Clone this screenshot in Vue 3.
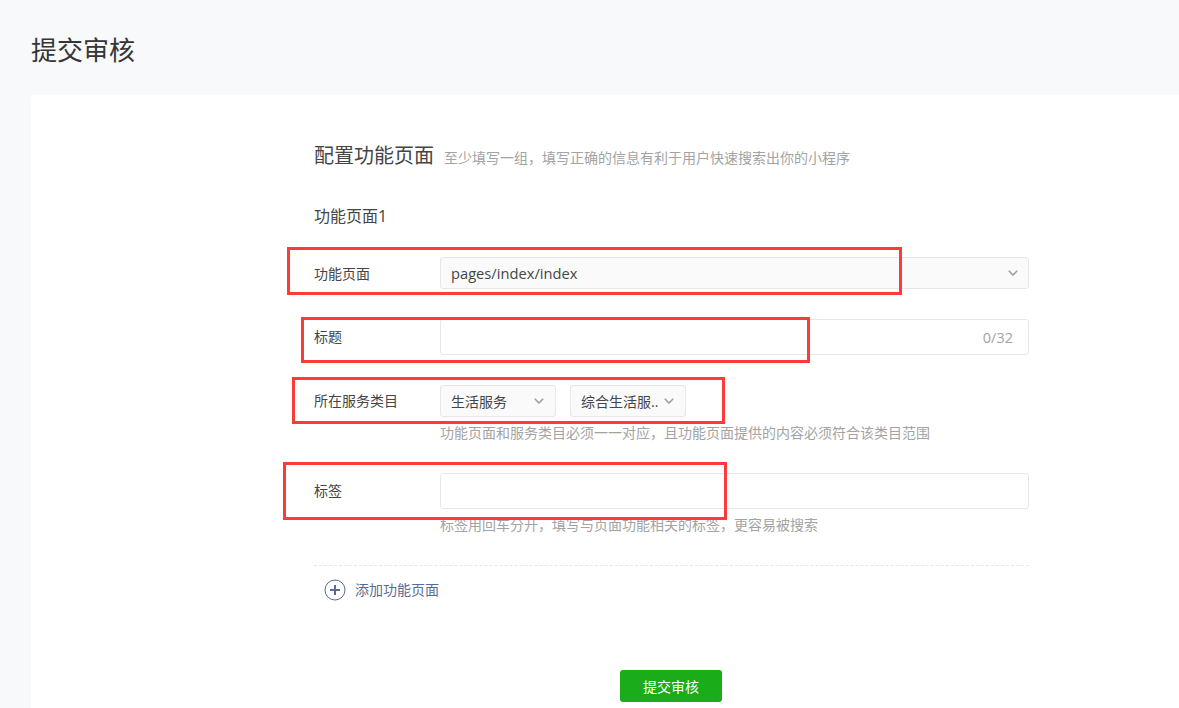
<script setup>
const annotations = [
  { left: 287, top: 247, width: 615, height: 48 },
  { left: 301, top: 317, width: 509, height: 46 },
  { left: 292, top: 377, width: 433, height: 47 },
  { left: 283, top: 462, width: 444, height: 58 }
]
</script>

<template>
  <div class="page">
    <h1 class="page-title">提交审核</h1>
    <main class="card">
      <div class="form">
        <div class="heading">
          <h2>配置功能页面</h2>
          <span>至少填写一组，填写正确的信息有利于用户快速搜索出你的小程序</span>
        </div>
        <h3 class="group-title">功能页面1</h3>

        <div class="row row-page">
          <label>功能页面</label>
          <div class="control select wide">
            <span class="value">pages/index/index</span>
            <svg class="chevron" viewBox="0 0 10 6" aria-hidden="true"><path d="M.8.8 5 5l4.2-4.2" /></svg>
          </div>
        </div>

        <div class="row row-title">
          <label>标题</label>
          <div class="control field">
            <span class="count">0/32</span>
          </div>
        </div>

        <div class="row row-category">
          <label>所在服务类目</label>
          <div class="selects">
            <div class="control select small">
              <span class="value">生活服务</span>
              <svg class="chevron" viewBox="0 0 10 6" aria-hidden="true"><path d="M.8.8 5 5l4.2-4.2" /></svg>
            </div>
            <div class="control select small">
              <span class="value">综合生活服..</span>
              <svg class="chevron" viewBox="0 0 10 6" aria-hidden="true"><path d="M.8.8 5 5l4.2-4.2" /></svg>
            </div>
          </div>
        </div>
        <p class="hint hint-category">功能页面和服务类目必须一一对应，且功能页面提供的内容必须符合该类目范围</p>

        <div class="row row-tags">
          <label>标签</label>
          <div class="control field"></div>
        </div>
        <p class="hint hint-tags">标签用回车分开，填写与页面功能相关的标签，更容易被搜索</p>

        <div class="add">
          <svg viewBox="0 0 22 22" aria-hidden="true">
            <circle cx="11" cy="11" r="10" class="ring" />
            <path d="M11 6v10M6 11h10" class="plus" />
          </svg>
          <span>添加功能页面</span>
        </div>

        <div class="actions">
          <button type="button">提交审核</button>
        </div>
      </div>
    </main>

    <div
      v-for="(box, index) in annotations"
      :key="index"
      class="annotation"
      :style="{ left: box.left + 'px', top: box.top + 'px', width: box.width + 'px', height: box.height + 'px' }"
    ></div>
  </div>
</template>

<style scoped>
.page {
  position: relative;
  height: 708px;
  overflow: hidden;
  background: #f8f9fb;
  font-family: "Open Sans", "Noto Sans CJK SC", sans-serif;
  color: #454545;
}
.page-title {
  margin: 0;
  padding: 31px 0 0 31px;
  height: 95px;
  box-sizing: border-box;
  font-size: 26px;
  line-height: 38px;
  font-weight: 400;
  color: #353535;
}
.card {
  margin-left: 31px;
  height: 613px;
  background: #fff;
  border-radius: 4px 0 0 0;
  padding: 46px 0 0 283px;
  box-sizing: border-box;
}
.form {
  width: 715px;
}
.heading {
  display: flex;
  align-items: baseline;
  height: 30px;
}
.heading h2 {
  margin: 0 10px 0 0;
  font-size: 20px;
  line-height: 30px;
  font-weight: 400;
}
.heading span {
  font-size: 14px;
  color: #a3a3a3;
}
.group-title {
  margin: 33px 0 0;
  font-size: 16px;
  line-height: 24px;
  font-weight: 400;
}
.row {
  display: grid;
  grid-template-columns: 126px 1fr;
  align-items: center;
}
.row label {
  font-size: 14px;
  line-height: 20px;
}
.row-page { margin-top: 29px; }
.row-page label { padding-top: 2px; }
.row-title { margin-top: 30px; }
.row-category { margin-top: 30px; }
.row-tags { margin-top: 30px; }
.control {
  display: flex;
  align-items: center;
  box-sizing: border-box;
  border: 1px solid #e7e7eb;
  border-radius: 3px;
}
.select {
  height: 32px;
  padding: 0 10px;
  background: #fafafa;
  justify-content: space-between;
}
.value {
  font-size: 14px;
  white-space: nowrap;
}
.wide .value {
  font-size: 14.7px;
}
.chevron {
  width: 10px;
  height: 6px;
  flex: none;
  fill: none;
  stroke: #9a9a9a;
  stroke-width: 1.5;
}
.field {
  height: 36px;
  padding: 0 15px;
  justify-content: flex-end;
  background: #fff;
}
.count {
  font-size: 14.5px;
  color: #a3a3a3;
}
.selects {
  display: flex;
  gap: 14px;
}
.small {
  width: 116px;
  padding-right: 11px;
}
.hint {
  margin: 6px 0 0 126px;
  font-size: 14px;
  line-height: 20px;
  color: #a3a3a3;
  white-space: nowrap;
}
.add {
  display: flex;
  align-items: center;
  gap: 9px;
  margin-top: 30px;
  padding: 13px 0 0 10px;
  border-top: 1px dashed #e7e7eb;
  font-size: 14px;
  line-height: 22px;
  color: #576b95;
}
.add svg {
  width: 22px;
  height: 22px;
  flex: none;
  fill: none;
}
.ring {
  stroke: #576b95;
  stroke-width: 1;
}
.plus {
  stroke: #576b95;
  stroke-width: 2;
}
.actions {
  display: flex;
  justify-content: center;
  margin-top: 69px;
}
.actions button {
  width: 102px;
  height: 32px;
  margin-right: 1px;
  border: 0;
  border-radius: 3px;
  background: #1aad19;
  color: #fff;
  font-family: inherit;
  font-size: 14px;
  padding: 0;
}
.annotation {
  position: absolute;
  box-sizing: border-box;
  border: 3px solid #ff3a3a;
  pointer-events: none;
}
</style>
